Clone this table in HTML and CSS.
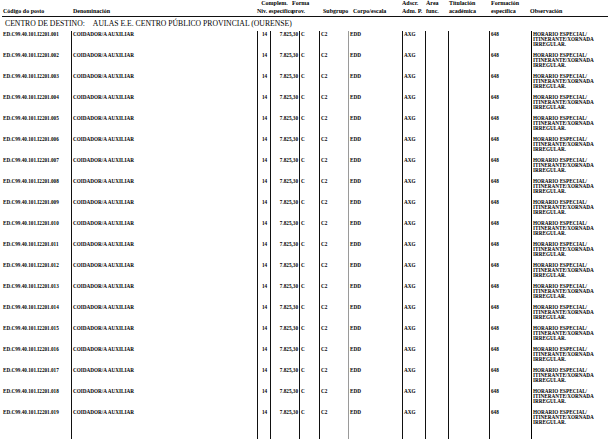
FILE: index.html
```html
<!DOCTYPE html>
<html lang="gl">
<head>
<meta charset="utf-8">
<title>Relación de postos</title>
<link rel="stylesheet" href="styles.css">
</head>
<body>
<div class="page">
  <div class="head">
    <div class="hc"><span>&nbsp;</span><span>Código do posto</span></div>
    <div class="hc"><span>&nbsp;</span><span>Denominación</span></div>
    <div class="hc grp"><span class="ctr">Complem.</span><span>Niv. específico</span></div>
    <div class="hc"><span>Forma</span><span>prov.</span></div>
    <div class="hc"><span>&nbsp;</span><span>Subgrupo</span></div>
    <div class="hc"><span>&nbsp;</span><span>Corpo/escala</span></div>
    <div class="hc"><span>Adscr.</span><span>Adm. P.</span></div>
    <div class="hc"><span>Área</span><span>func.</span></div>
    <div class="hc"><span>Titulación</span><span>académica</span></div>
    <div class="hc"><span>Formación</span><span>específica</span></div>
    <div class="hc"><span>&nbsp;</span><span>Observación</span></div>
  </div>
  <div class="title"><span>CENTRO DE DESTINO:</span><span>AULAS E.E. CENTRO PÚBLICO PROVINCIAL (OURENSE)</span></div>
  <div class="rows">
    <div class="row"><div class="c code">ED.C99.40.101.I2201.001</div><div class="c">COIDADOR/A AUXILIAR</div><div class="c niv">14</div><div class="c num">7.825,30</div><div class="c">C</div><div class="c">C2</div><div class="c gray">EDD</div><div class="c">AXG</div><div class="c"></div><div class="c"></div><div class="c">648</div><div class="c obs">HORARIO ESPECIAL/<br>ITINERANTE/XORNADA<br>IRREGULAR.</div></div>
    <div class="row"><div class="c code">ED.C99.40.101.I2201.002</div><div class="c">COIDADOR/A AUXILIAR</div><div class="c niv">14</div><div class="c num">7.825,30</div><div class="c">C</div><div class="c">C2</div><div class="c gray">EDD</div><div class="c">AXG</div><div class="c"></div><div class="c"></div><div class="c">648</div><div class="c obs">HORARIO ESPECIAL/<br>ITINERANTE/XORNADA<br>IRREGULAR.</div></div>
    <div class="row"><div class="c code">ED.C99.40.101.I2201.003</div><div class="c">COIDADOR/A AUXILIAR</div><div class="c niv">14</div><div class="c num">7.825,30</div><div class="c">C</div><div class="c">C2</div><div class="c gray">EDD</div><div class="c">AXG</div><div class="c"></div><div class="c"></div><div class="c">648</div><div class="c obs">HORARIO ESPECIAL/<br>ITINERANTE/XORNADA<br>IRREGULAR.</div></div>
    <div class="row"><div class="c code">ED.C99.40.101.I2201.004</div><div class="c">COIDADOR/A AUXILIAR</div><div class="c niv">14</div><div class="c num">7.825,30</div><div class="c">C</div><div class="c">C2</div><div class="c gray">EDD</div><div class="c">AXG</div><div class="c"></div><div class="c"></div><div class="c">648</div><div class="c obs">HORARIO ESPECIAL/<br>ITINERANTE/XORNADA<br>IRREGULAR.</div></div>
    <div class="row"><div class="c code">ED.C99.40.101.I2201.005</div><div class="c">COIDADOR/A AUXILIAR</div><div class="c niv">14</div><div class="c num">7.825,30</div><div class="c">C</div><div class="c">C2</div><div class="c gray">EDD</div><div class="c">AXG</div><div class="c"></div><div class="c"></div><div class="c">648</div><div class="c obs">HORARIO ESPECIAL/<br>ITINERANTE/XORNADA<br>IRREGULAR.</div></div>
    <div class="row"><div class="c code">ED.C99.40.101.I2201.006</div><div class="c">COIDADOR/A AUXILIAR</div><div class="c niv">14</div><div class="c num">7.825,30</div><div class="c">C</div><div class="c">C2</div><div class="c gray">EDD</div><div class="c">AXG</div><div class="c"></div><div class="c"></div><div class="c">648</div><div class="c obs">HORARIO ESPECIAL/<br>ITINERANTE/XORNADA<br>IRREGULAR.</div></div>
    <div class="row"><div class="c code">ED.C99.40.101.I2201.007</div><div class="c">COIDADOR/A AUXILIAR</div><div class="c niv">14</div><div class="c num">7.825,30</div><div class="c">C</div><div class="c">C2</div><div class="c gray">EDD</div><div class="c">AXG</div><div class="c"></div><div class="c"></div><div class="c">648</div><div class="c obs">HORARIO ESPECIAL/<br>ITINERANTE/XORNADA<br>IRREGULAR.</div></div>
    <div class="row"><div class="c code">ED.C99.40.101.I2201.008</div><div class="c">COIDADOR/A AUXILIAR</div><div class="c niv">14</div><div class="c num">7.825,30</div><div class="c">C</div><div class="c">C2</div><div class="c gray">EDD</div><div class="c">AXG</div><div class="c"></div><div class="c"></div><div class="c">648</div><div class="c obs">HORARIO ESPECIAL/<br>ITINERANTE/XORNADA<br>IRREGULAR.</div></div>
    <div class="row"><div class="c code">ED.C99.40.101.I2201.009</div><div class="c">COIDADOR/A AUXILIAR</div><div class="c niv">14</div><div class="c num">7.825,30</div><div class="c">C</div><div class="c">C2</div><div class="c gray">EDD</div><div class="c">AXG</div><div class="c"></div><div class="c"></div><div class="c">648</div><div class="c obs">HORARIO ESPECIAL/<br>ITINERANTE/XORNADA<br>IRREGULAR.</div></div>
    <div class="row"><div class="c code">ED.C99.40.101.I2201.010</div><div class="c">COIDADOR/A AUXILIAR</div><div class="c niv">14</div><div class="c num">7.825,30</div><div class="c">C</div><div class="c">C2</div><div class="c gray">EDD</div><div class="c">AXG</div><div class="c"></div><div class="c"></div><div class="c">648</div><div class="c obs">HORARIO ESPECIAL/<br>ITINERANTE/XORNADA<br>IRREGULAR.</div></div>
    <div class="row"><div class="c code">ED.C99.40.101.I2201.011</div><div class="c">COIDADOR/A AUXILIAR</div><div class="c niv">14</div><div class="c num">7.825,30</div><div class="c">C</div><div class="c">C2</div><div class="c gray">EDD</div><div class="c">AXG</div><div class="c"></div><div class="c"></div><div class="c">648</div><div class="c obs">HORARIO ESPECIAL/<br>ITINERANTE/XORNADA<br>IRREGULAR.</div></div>
    <div class="row"><div class="c code">ED.C99.40.101.I2201.012</div><div class="c">COIDADOR/A AUXILIAR</div><div class="c niv">14</div><div class="c num">7.825,30</div><div class="c">C</div><div class="c">C2</div><div class="c gray">EDD</div><div class="c">AXG</div><div class="c"></div><div class="c"></div><div class="c">648</div><div class="c obs">HORARIO ESPECIAL/<br>ITINERANTE/XORNADA<br>IRREGULAR.</div></div>
    <div class="row"><div class="c code">ED.C99.40.101.I2201.013</div><div class="c">COIDADOR/A AUXILIAR</div><div class="c niv">14</div><div class="c num">7.825,30</div><div class="c">C</div><div class="c">C2</div><div class="c gray">EDD</div><div class="c">AXG</div><div class="c"></div><div class="c"></div><div class="c">648</div><div class="c obs">HORARIO ESPECIAL/<br>ITINERANTE/XORNADA<br>IRREGULAR.</div></div>
    <div class="row"><div class="c code">ED.C99.40.101.I2201.014</div><div class="c">COIDADOR/A AUXILIAR</div><div class="c niv">14</div><div class="c num">7.825,30</div><div class="c">C</div><div class="c">C2</div><div class="c gray">EDD</div><div class="c">AXG</div><div class="c"></div><div class="c"></div><div class="c">648</div><div class="c obs">HORARIO ESPECIAL/<br>ITINERANTE/XORNADA<br>IRREGULAR.</div></div>
    <div class="row"><div class="c code">ED.C99.40.101.I2201.015</div><div class="c">COIDADOR/A AUXILIAR</div><div class="c niv">14</div><div class="c num">7.825,30</div><div class="c">C</div><div class="c">C2</div><div class="c gray">EDD</div><div class="c">AXG</div><div class="c"></div><div class="c"></div><div class="c">648</div><div class="c obs">HORARIO ESPECIAL/<br>ITINERANTE/XORNADA<br>IRREGULAR.</div></div>
    <div class="row"><div class="c code">ED.C99.40.101.I2201.016</div><div class="c">COIDADOR/A AUXILIAR</div><div class="c niv">14</div><div class="c num">7.825,30</div><div class="c">C</div><div class="c">C2</div><div class="c gray">EDD</div><div class="c">AXG</div><div class="c"></div><div class="c"></div><div class="c">648</div><div class="c obs">HORARIO ESPECIAL/<br>ITINERANTE/XORNADA<br>IRREGULAR.</div></div>
    <div class="row"><div class="c code">ED.C99.40.101.I2201.017</div><div class="c">COIDADOR/A AUXILIAR</div><div class="c niv">14</div><div class="c num">7.825,30</div><div class="c">C</div><div class="c">C2</div><div class="c gray">EDD</div><div class="c">AXG</div><div class="c"></div><div class="c"></div><div class="c">648</div><div class="c obs">HORARIO ESPECIAL/<br>ITINERANTE/XORNADA<br>IRREGULAR.</div></div>
    <div class="row"><div class="c code">ED.C99.40.101.I2201.018</div><div class="c">COIDADOR/A AUXILIAR</div><div class="c niv">14</div><div class="c num">7.825,30</div><div class="c">C</div><div class="c">C2</div><div class="c gray">EDD</div><div class="c">AXG</div><div class="c"></div><div class="c"></div><div class="c">648</div><div class="c obs">HORARIO ESPECIAL/<br>ITINERANTE/XORNADA<br>IRREGULAR.</div></div>
    <div class="row"><div class="c code">ED.C99.40.101.I2201.019</div><div class="c">COIDADOR/A AUXILIAR</div><div class="c niv">14</div><div class="c num">7.825,30</div><div class="c">C</div><div class="c">C2</div><div class="c gray">EDD</div><div class="c">AXG</div><div class="c"></div><div class="c"></div><div class="c">648</div><div class="c obs">HORARIO ESPECIAL/<br>ITINERANTE/XORNADA<br>IRREGULAR.</div></div>
    <div class="row"><div class="c code"></div><div class="c"></div><div class="c niv"></div><div class="c num"></div><div class="c"></div><div class="c"></div><div class="c gray"></div><div class="c"></div><div class="c"></div><div class="c"></div><div class="c"></div><div class="c obs"></div></div>
  </div>
</div>
</body>
</html>
```
FILE: styles.css
```css
* { box-sizing: border-box; }
html, body { margin: 0; padding: 0; background: #fff; }
body {
  font-family: "Liberation Serif", "Times New Roman", serif;
  color: #000;
  width: 616px;
  height: 439px;
  overflow: hidden;
}
.page { width: 616px; }

.head {
  display: grid;
  grid-template-columns: 70px 184px 35px 31px 30px 49px 24px 23px 42px 39px 1fr;
  margin: 0 8px 0 2px;
  padding-left: 1px;
  border-bottom: 1px solid #111;
  font-size: 6px;
  font-weight: bold;
  line-height: 7.8px;
}
.hc { display: flex; flex-direction: column; white-space: nowrap; }
.hc .ctr { text-align: center; }

.title {
  display: flex;
  gap: 8px;
  padding-left: 5px;
  height: 14.4px;
  line-height: 14px;
  font-size: 7.7px;
  white-space: nowrap;
}

.row {
  display: grid;
  grid-template-columns: 71px 186px 13px 29px 20px 29px 54px 23px 23px 41px 42px 1fr;
  height: 21px;
  font-size: 5.2px;
  font-weight: bold;
  line-height: 5.2px;
}
.c {
  border-left: 1px solid #111;
  padding: 1px 0 0 1px;
  white-space: nowrap;
}
.c.code { border-left: none; padding-left: 3px; }
.c.niv { padding-left: 4px; }
.c.num { text-align: right; padding-right: 1px; padding-left: 0; }
.c.gray { border-left-color: #9a9a9a; }
.c.obs { border-left: 1.5px solid #000; }
```
